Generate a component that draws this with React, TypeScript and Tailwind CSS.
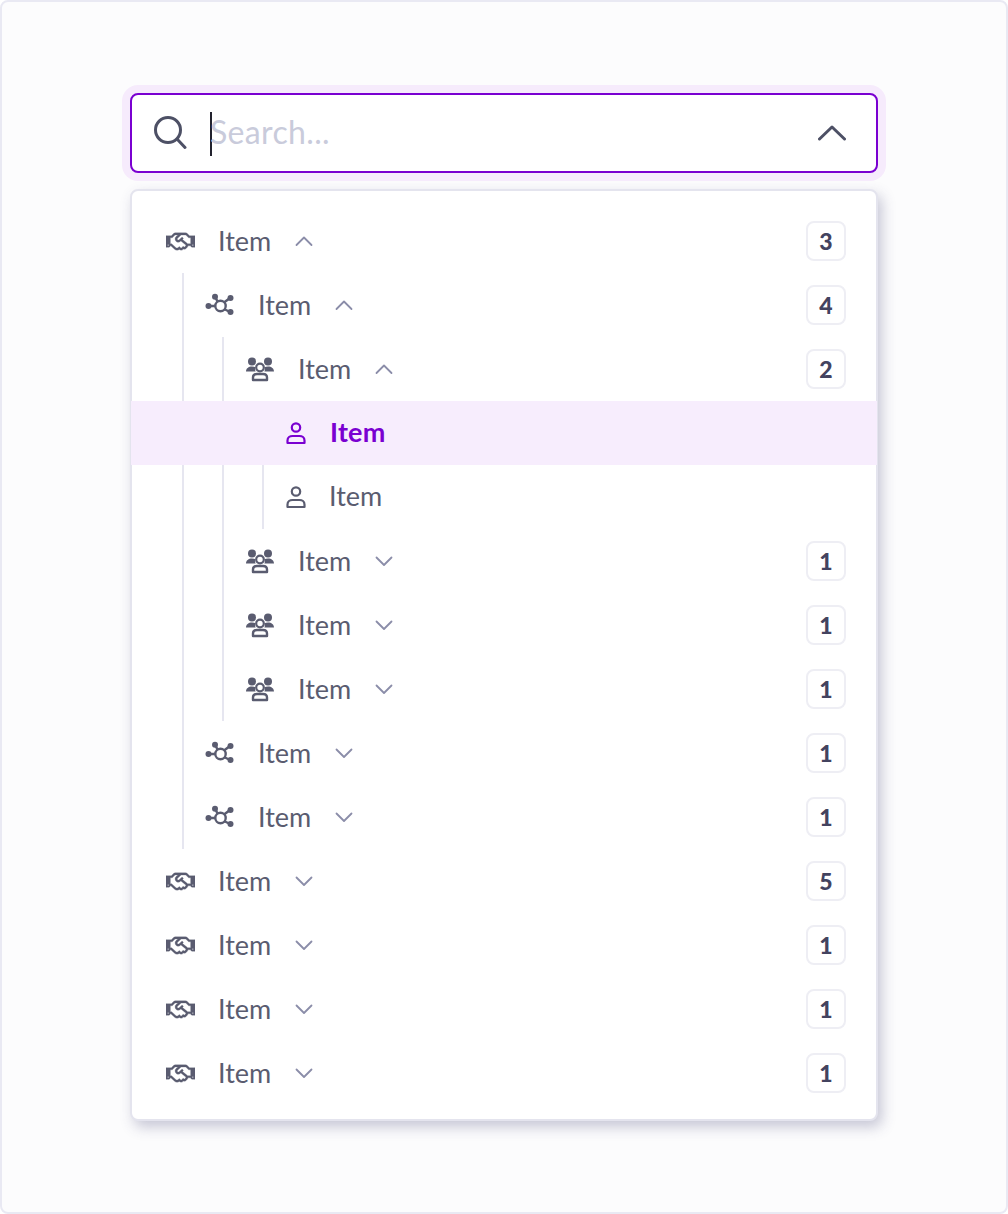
import React from "react";
import { FaRegHandshake } from "react-icons/fa";

const Chevron = ({ open }: { open: boolean }) => (
  <svg width="20" height="12" viewBox="0 0 20 12" fill="none" className="text-[#8b8da9]">
    <path
      d={open ? "M2.5 10 L10 2.5 L17.5 10" : "M2.5 2.5 L10 10 L17.5 2.5"}
      stroke="currentColor"
      strokeWidth="1.8"
      strokeLinecap="round"
      strokeLinejoin="round"
    />
  </svg>
);

const HandshakeIcon = () => (
  <FaRegHandshake size={29} stroke="currentColor" strokeWidth={6} className="text-[#5a5c70]" />
);

const NetworkIcon = () => (
  <svg width="30" height="24" viewBox="0 -1 30 24" fill="none" className="text-[#5a5c70]">
    <g stroke="currentColor" strokeWidth="2.4">
      <circle cx="15.5" cy="12" r="5.2" />
      <path d="M3 12H10M10 2.5L12.5 7.5M25 4L19 8.5M25 18L19 15" />
    </g>
    <g fill="currentColor">
      <circle cx="3.5" cy="12" r="3" />
      <circle cx="10" cy="2.8" r="3" />
      <circle cx="25.5" cy="4" r="3" />
      <circle cx="25.5" cy="18" r="3" />
    </g>
  </svg>
);

const UsersIcon = () => (
  <svg width="30" height="26" viewBox="0 0 30 26" fill="none" className="text-[#5a5c70]">
    <circle cx="7" cy="5.5" r="4" fill="currentColor" />
    <circle cx="23" cy="5.5" r="4" fill="currentColor" />
    <path d="M1 15.5C1 12.5 3.5 10.5 7 10.5C8.5 10.5 9.6 10.8 10.5 11.3C10 13 10 14.3 10.6 15.5H1Z" fill="currentColor" />
    <path d="M29 15.5C29 12.5 26.5 10.5 23 10.5C21.5 10.5 20.4 10.8 19.5 11.3C20 13 20 14.3 19.4 15.5H29Z" fill="currentColor" />
    <circle cx="15" cy="11.5" r="3.8" stroke="currentColor" strokeWidth="2.2" />
    <path d="M8 24V21.5C8 19 10 18 12 18H18C20 18 22 19 22 21.5V24H8Z" stroke="currentColor" strokeWidth="2.4" strokeLinejoin="round" />
  </svg>
);

const UserIcon = ({ active }: { active?: boolean }) => (
  <svg width="20" height="24" viewBox="0 0 20 24" fill="none" className={active ? "text-[#7a00d1]" : "text-[#5a5c70]"}>
    <circle cx="10" cy="6.5" r="4.2" stroke="currentColor" strokeWidth="2.2" />
    <path d="M1.5 22V19.5C1.5 16.5 4 15 6.5 15H13.5C16 15 18.5 16.5 18.5 19.5V22H1.5Z" stroke="currentColor" strokeWidth="2.2" strokeLinejoin="round" />
  </svg>
);

const Badge = ({ value }: { value: number }) => (
  <span className="flex h-10 w-10 items-center justify-center rounded-lg border-2 border-[#eeeef4] text-[23px] font-black text-[#43435f]">
    {value}
  </span>
);

const Row = ({
  depth,
  icon,
  open,
  count,
}: {
  depth: 0 | 1 | 2;
  icon: React.ReactNode;
  open: boolean;
  count: number;
}) => {
  const pad = depth === 0 ? "pl-[33px]" : depth === 1 ? "pl-[73px]" : "pl-[113px]";
  return (
    <div className={`flex h-16 items-center pr-[30px] ${pad}`}>
      <span className="flex w-[30px] justify-center">{icon}</span>
      <span className="ml-[23px] w-[53px] text-[27px] text-[#5a5c70]">Item</span>
      <span className="ml-[23px]">
        <Chevron open={open} />
      </span>
      <span className="ml-auto">
        <Badge value={count} />
      </span>
    </div>
  );
};

const Line = ({ className }: { className: string }) => (
  <span className={`absolute top-0 bottom-0 w-[2px] bg-[#e6e6f0] ${className}`} />
);

export default function App() {
  return (
    <div className="flex h-[1214px] w-[1008px] flex-col items-center rounded-lg border-2 border-[#e9e9f3] bg-[#fcfcfd] pt-[91px] font-['Lato',sans-serif]">
      {/* Search */}
      <div className="flex h-20 w-[748px] shrink-0 items-center rounded-lg border-2 border-[#7a00d1] bg-white pl-[21px] pr-[30px] shadow-[0_0_0_8px_#f6ebfc]">
        <svg width="34" height="36" viewBox="0 0 34 36" fill="none" className="text-[#4d5065]">
          <circle cx="15" cy="15" r="12.5" stroke="currentColor" strokeWidth="3" />
          <path d="M24.5 24.5L32 32.5" stroke="currentColor" strokeWidth="3" strokeLinecap="round" />
        </svg>
        <span className="ml-[23px] mt-[2px] h-11 w-[2px] bg-[#22222e]" />
        <span className="mb-[2px] ml-[-2px] text-[32px] leading-none tracking-[0.35px] text-[#c9cbdb]">Search...</span>
        <svg width="28" height="16" viewBox="0 0 28 16" fill="none" className="ml-auto text-[#4d5065]">
          <path d="M1.5 14L14 2L26.5 14" stroke="currentColor" strokeWidth="3" strokeLinecap="round" strokeLinejoin="round" />
        </svg>
      </div>

      {/* Tree */}
      <div className="mt-4 w-[748px] rounded-lg border-2 border-[#e4e4ee] bg-white pt-[18px] pb-[14px] shadow-[4px_6px_14px_rgba(60,60,110,0.28)]">
        <Row depth={0} icon={<HandshakeIcon />} open count={3} />
        <div className="relative">
          <Line className="left-[50px]" />
          <Row depth={1} icon={<NetworkIcon />} open count={4} />
          <div className="relative">
            <Line className="left-[90px]" />
            <Row depth={2} icon={<UsersIcon />} open count={2} />
            <div className="relative">
              <Line className="left-[130px]" />
              <div className="relative mx-[-1px] flex h-16 items-center bg-[#f7edfd] pl-[155px]">
                <UserIcon active />
                <span className="mb-[2px] ml-[24px] text-[27px] font-bold tracking-[0.25px] text-[#7a00d1]">Item</span>
              </div>
              <div className="flex h-16 items-center pl-[154px]">
                <UserIcon />
                <span className="mb-[2px] ml-[23px] text-[27px] text-[#5a5c70]">Item</span>
              </div>
            </div>
            <Row depth={2} icon={<UsersIcon />} open={false} count={1} />
            <Row depth={2} icon={<UsersIcon />} open={false} count={1} />
            <Row depth={2} icon={<UsersIcon />} open={false} count={1} />
          </div>
          <Row depth={1} icon={<NetworkIcon />} open={false} count={1} />
          <Row depth={1} icon={<NetworkIcon />} open={false} count={1} />
        </div>
        <Row depth={0} icon={<HandshakeIcon />} open={false} count={5} />
        <Row depth={0} icon={<HandshakeIcon />} open={false} count={1} />
        <Row depth={0} icon={<HandshakeIcon />} open={false} count={1} />
        <Row depth={0} icon={<HandshakeIcon />} open={false} count={1} />
      </div>
    </div>
  );
}
